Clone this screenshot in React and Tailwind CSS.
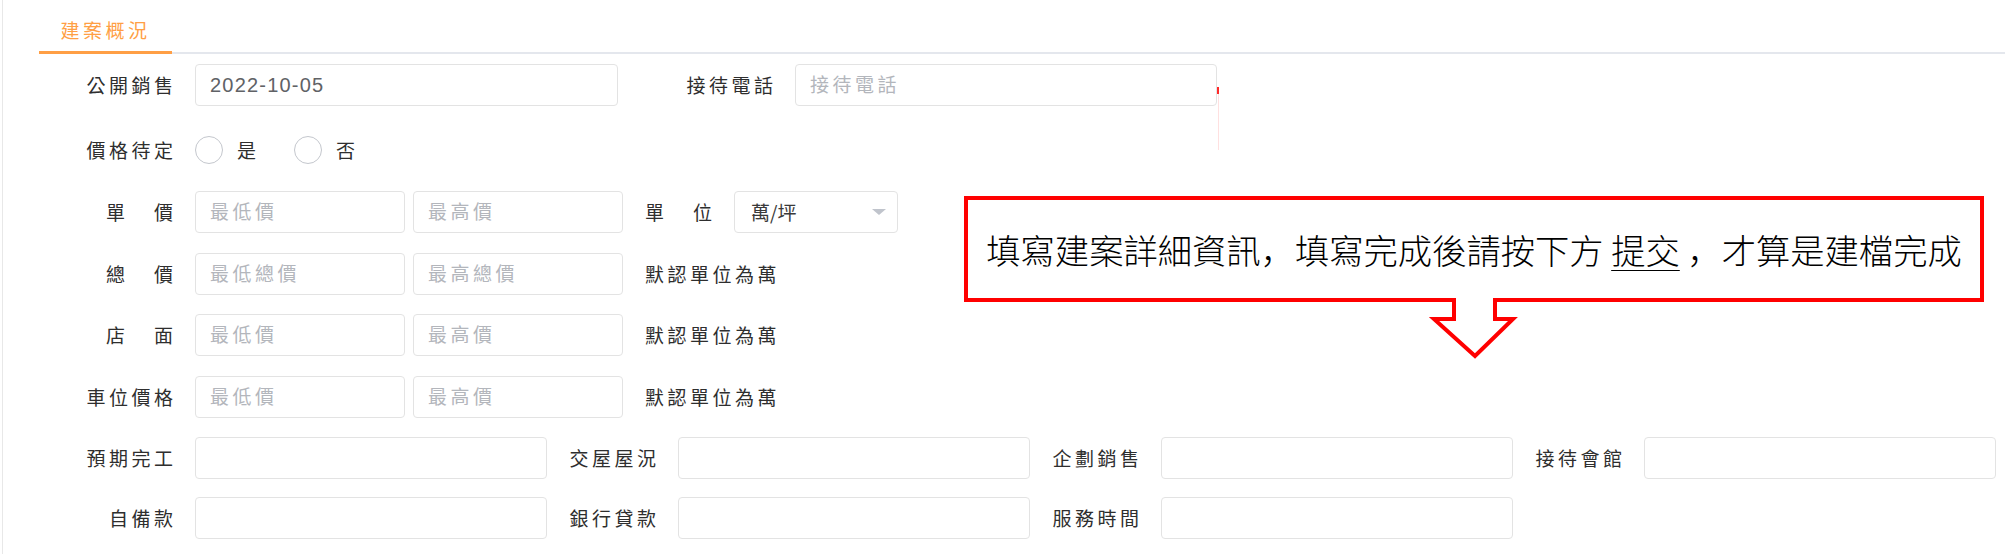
import React from "react";

const TEXT = "text-[19px] text-[#2e2e2e]";

function Label({ text }) {
  const parts = text.split(" ");
  return (
    <div className="w-[131px] shrink-0 flex justify-end items-center pr-[22px]">
      {parts.length > 1 ? (
        <span className={`w-[67px] flex justify-between ${TEXT}`}>
          <span>{parts[0]}</span>
          <span>{parts[1]}</span>
        </span>
      ) : (
        <span className={`${TEXT} tracking-[3.5px] -mr-[3.5px] whitespace-nowrap`}>{text}</span>
      )}
    </div>
  );
}

function Field({ w, placeholder, value }) {
  return (
    <input
      readOnly
      defaultValue={value}
      placeholder={placeholder}
      className={`${w} h-[42px] shrink-0 border border-[#e3e3e3] rounded-[4px] pl-[14px] outline-none bg-white text-[20px] tracking-[1.2px] text-[#606266] font-['Liberation_Sans','Noto_Sans_CJK_TC',sans-serif] placeholder:text-[19px] placeholder:tracking-[3.5px] placeholder:text-[#b3b6bc]`}
    />
  );
}

function Radio({ label }) {
  return (
    <div className="flex items-center">
      <span className="w-[28px] h-[28px] rounded-full border-[1.5px] border-[#c4c7cd] bg-white" />
      <span className={`${TEXT} ml-[14px]`}>{label}</span>
    </div>
  );
}

function RangeRow({ label, lo, hi, note, className }) {
  return (
    <div className={`flex h-[42px] ${className}`}>
      <Label text={label} />
      <Field w="w-[210px]" placeholder={lo} />
      <div className="ml-[8px]">
        <Field w="w-[210px]" placeholder={hi} />
      </div>
      {note && (
        <span className={`${TEXT} tracking-[3.5px] ml-[22px] self-center whitespace-nowrap`}>{note}</span>
      )}
    </div>
  );
}

function GridItem({ label }) {
  return (
    <div className="flex">
      <Label text={label} />
      <Field w="w-[352px]" />
    </div>
  );
}

export default function App() {
  return (
    <div className="relative w-[2005px] h-[554px] bg-white overflow-hidden font-['Noto_Sans_CJK_TC','Noto_Sans',sans-serif]">
      <div className="ml-[2px] h-full border-l border-[#e8e8e8]">
        {/* tabs */}
        <div className="ml-[36px] h-[54px] flex border-b-2 border-[#e4e7ed]">
          <div className="w-[133px] h-[54px] -mb-[2px] pt-[16px] leading-[28px] text-center border-b-[3px] border-[#ff9f45] text-[19px] tracking-[3.5px] text-[#ff9f45]">
            建案概況
          </div>
        </div>

        {/* form */}
        <div className="pl-[61px]">
          <div className="flex h-[42px] mt-[10px]">
            <Label text="公開銷售" />
            <Field w="w-[423px]" value="2022-10-05" />
            <div className="ml-[46px] flex">
              <Label text="接待電話" />
              <Field w="w-[422px]" placeholder="接待電話" />
            </div>
          </div>

          <div className="flex h-[42px] mt-[23px] items-center">
            <Label text="價格待定" />
            <Radio label="是" />
            <div className="ml-[38px]">
              <Radio label="否" />
            </div>
          </div>

          <div className="flex h-[42px] mt-[20px]">
            <Label text="單 價" />
            <Field w="w-[210px]" placeholder="最低價" />
            <div className="ml-[8px]">
              <Field w="w-[210px]" placeholder="最高價" />
            </div>
            <span className={`ml-[22px] w-[67px] self-center flex justify-between ${TEXT}`}>
              <span>單</span>
              <span>位</span>
            </span>
            <div className="ml-[22px] w-[164px] h-[42px] border border-[#e3e3e3] rounded-[4px] flex items-center justify-between pl-[16px] pr-[11px]">
              <span className="text-[19px] text-[#3a3a3a] font-['Noto_Sans_CJK_TC','Liberation_Sans',sans-serif]">萬/坪</span>
              <svg width="14" height="7" viewBox="0 0 14 7">
                <polygon points="0,0 14,0 7,6" fill="#c0c4cc" />
              </svg>
            </div>
          </div>

          <RangeRow className="mt-[20px]" label="總 價" lo="最低總價" hi="最高總價" note="默認單位為萬" />
          <RangeRow className="mt-[19px]" label="店 面" lo="最低價" hi="最高價" note="默認單位為萬" />
          <RangeRow className="mt-[20px]" label="車位價格" lo="最低價" hi="最高價" note="默認單位為萬" />

          <div className="flex mt-[19px]">
            <GridItem label="預期完工" />
            <GridItem label="交屋屋況" />
            <GridItem label="企劃銷售" />
            <GridItem label="接待會館" />
          </div>
          <div className="flex mt-[18px]">
            <GridItem label="自備款" />
            <GridItem label="銀行貸款" />
            <GridItem label="服務時間" />
          </div>
        </div>
      </div>

      {/* stray red mark */}
      <span className="absolute left-[1217px] top-[87px] w-[2px] h-[7px] bg-[#ff2a2a]" />
      <span className="absolute left-[1218px] top-[94px] w-px h-[56px] bg-[#ffe0e0]" />

      {/* callout annotation */}
      <div className="absolute left-[962px] top-[194px] w-[1024px] h-[168px]">
        <svg width="1024" height="168" viewBox="0 0 1024 168" className="absolute inset-0">
          <path
            d="M4 4 H1020 V106 H533 V125 H551 L513 162 L472 125 H492 V106 H4 Z"
            fill="#fff"
            stroke="#ff0000"
            strokeWidth="4"
          />
        </svg>
        <div className="absolute left-[4px] top-[4px] w-[1016px] h-[102px] flex items-center justify-center">
          <span className="whitespace-pre text-[34.3px] leading-none font-light text-black font-['Noto_Sans_CJK_SC','Noto_Sans_CJK_TC',sans-serif]">
            {"填寫建案詳細資訊，填寫完成後請按下方 "}
            <span className="underline underline-offset-[6px] decoration-[1.2px]">提交</span>
            {" ，才算是建檔完成"}
          </span>
        </div>
      </div>
    </div>
  );
}
